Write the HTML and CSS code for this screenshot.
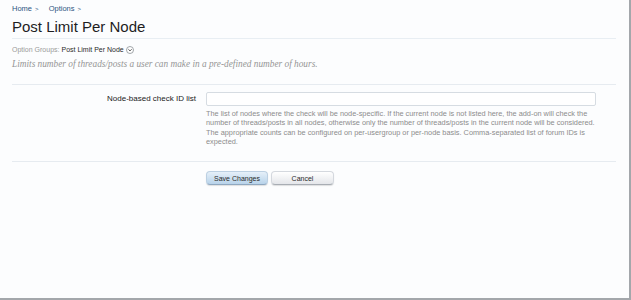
FILE: index.html
```html
<!DOCTYPE html>
<html lang="en">
<head>
  <meta charset="UTF-8">
  <title>Post Limit Per Node</title>
  <link rel="stylesheet" href="styles.css">
</head>
<body>
  <div class="page">
    <div class="breadcrumb">
      <a href="#">Home</a><span class="arrow">&gt;</span>
      <a href="#">Options</a><span class="arrow">&gt;</span>
    </div>
    <h1 class="title">Post Limit Per Node</h1>
    <div class="option-groups">
      <span class="og-label">Option Groups:</span>
      <span class="og-value">Post Limit Per Node</span>
      <svg class="og-menu" width="8" height="8" viewBox="0 0 8 8">
        <circle cx="4" cy="4" r="3.5" fill="#fff" stroke="#8a8f95" stroke-width="0.8"/>
        <path d="M2.4 3.3 L4 4.9 L5.6 3.3" fill="none" stroke="#444" stroke-width="0.9"/>
      </svg>
    </div>
    <p class="description">Limits number of threads/posts a user can make in a pre-defined number of hours.</p>

    <form class="options-form">
      <div class="ctrl-row">
        <label class="ctrl-label" for="nodeIds">Node-based check ID list</label>
        <div class="ctrl-unit">
          <input class="text-input" id="nodeIds" type="text">
          <p class="explain">The list of nodes where the check will be node-specific. If the current node is not listed here, the add-on will check the number of threads/posts in all nodes, otherwise only the number of threads/posts in the current node will be considered. The appropriate counts can be configured on per-usergroup or per-node basis. Comma-separated list of forum IDs is expected.</p>
        </div>
      </div>
      <div class="submit-row">
        <button class="button primary" type="button">Save Changes</button>
        <button class="button" type="button">Cancel</button>
      </div>
    </form>
  </div>
</body>
</html>
```

FILE: styles.css
```css
body {
  margin: 0;
  background: #fff;
  font-family: "Liberation Sans", Arial, sans-serif;
}

.page {
  width: 604px;
  height: 298px;
  padding: 0 13px 0 12px;
  background: #fcfdfe;
  border-right: 2px solid #a3a7ab;
  border-bottom: 2px solid #a3a7ab;
  overflow: hidden;
}

.breadcrumb {
  padding-top: 4px;
  font-size: 7.5px;
  line-height: 9px;
  color: #2c5481;
}
.breadcrumb a {
  color: #2c5481;
  text-decoration: none;
}
.breadcrumb .arrow {
  margin: 0 8px 0 3px;
  font-size: 6px;
}

.title {
  margin: 4px 0 0;
  padding-bottom: 2px;
  font-size: 15px;
  line-height: 18px;
  font-weight: normal;
  color: #1e1e1e;
  border-bottom: 1px solid #e8eef3;
}

.option-groups {
  display: flex;
  align-items: center;
  margin-top: 6px;
  font-size: 7px;
  line-height: 9px;
}
.og-label {
  color: #9a9a9a;
  margin-right: 2px;
}
.og-value {
  color: #2a2a2a;
}
.og-menu {
  margin-left: 2px;
}

.description {
  margin: 4px 0 0;
  font-family: "Liberation Serif", Georgia, serif;
  font-style: italic;
  font-size: 9.3px;
  line-height: 12px;
  color: #959595;
}

.options-form {
  margin-top: 14px;
  border-top: 1px solid #e6ebf0;
}

.ctrl-row {
  display: grid;
  grid-template-columns: 184px 390px;
  column-gap: 10px;
  padding: 7px 0 15px;
  border-bottom: 1px solid #e6ebf0;
}
.ctrl-label {
  text-align: right;
  padding-top: 2px;
  font-size: 8px;
  line-height: 10px;
  color: #1a1a1a;
}
.text-input {
  display: block;
  box-sizing: border-box;
  width: 100%;
  height: 14px;
  margin: 0;
  border: 1px solid #d6dce2;
  border-radius: 2px;
  background: #fff;
}
.explain {
  margin: 3px 0 0;
  font-size: 7.35px;
  line-height: 9.3px;
  color: #8c8c8c;
}

.submit-row {
  display: flex;
  gap: 3px;
  padding: 9px 0 0 194px;
}
.button {
  width: 63px;
  height: 14px;
  padding: 0;
  font-family: "Liberation Sans", Arial, sans-serif;
  font-size: 7px;
  color: #2a2a2a;
  border: 1px solid #d4d8de;
  border-bottom-color: #a8adb4;
  border-radius: 4px;
  background: linear-gradient(#ffffff, #e4e6ea);
  box-shadow: 0 1px 1px rgba(0, 0, 0, .12);
}
.button.primary {
  width: 62px;
  border-color: #bcd0e2;
  border-bottom-color: #8fa8c0;
  background: linear-gradient(#e6f0f9, #b8d3ea);
}
```
